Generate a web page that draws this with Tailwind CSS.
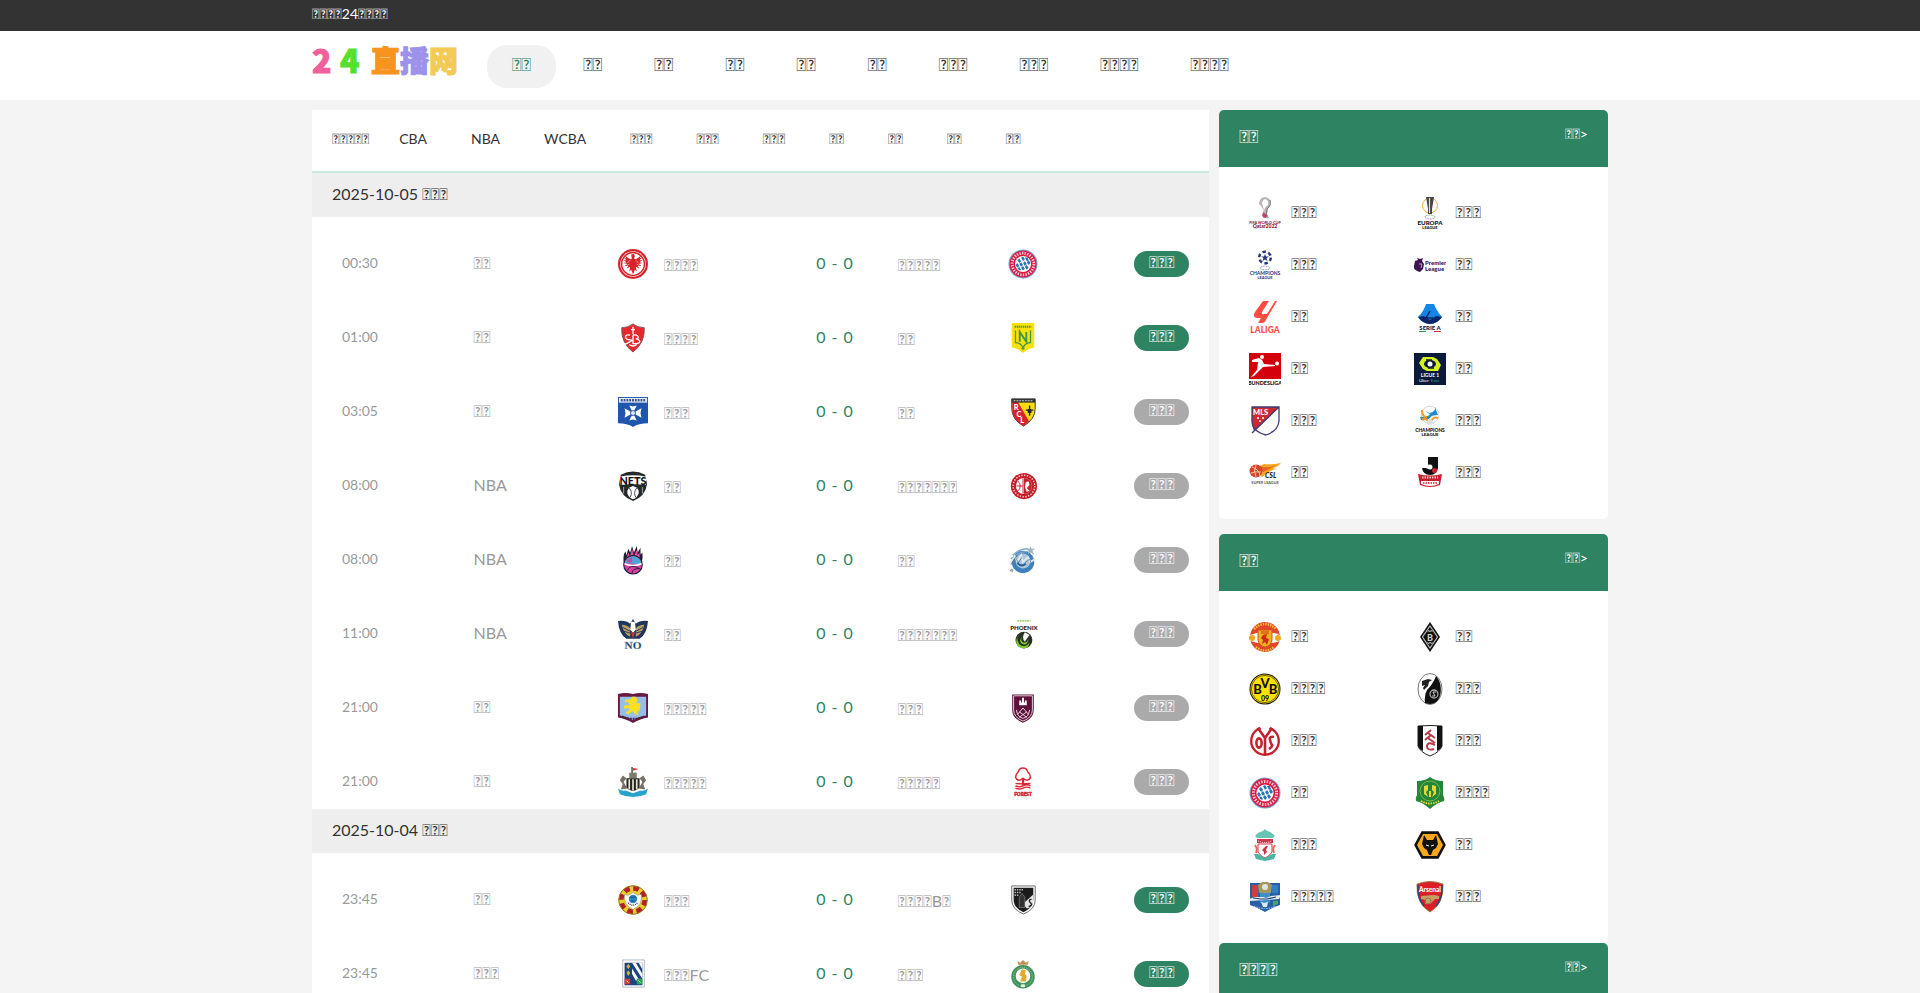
<!DOCTYPE html>
<html lang="zh">
<head>
    <meta charset="utf-8">
    <title>24直播网</title>
    <script src="https://cdn.jsdelivr.net/npm/@tailwindcss/browser@4"></script>
</head>
<body class="h-screen overflow-hidden bg-[#f4f4f4] font-[Lato,sans-serif] text-[#333]">

<!-- Crests -->
<svg class="hidden" xmlns="http://www.w3.org/2000/svg">
    <symbol id="frankfurt" viewBox="0 0 32 32">
        <circle cx="16" cy="16" r="16" fill="#d8232a"/><circle cx="16" cy="16" r="13.6" fill="#fff"/><circle cx="16" cy="16" r="13" fill="#d8232a"/><circle cx="16" cy="16" r="11.4" fill="#fff"/>
        <path d="M14 6l3-1 1 3-1 2 2 1 6-4-2 3 3-1-3 3 3 0-3 2 3 1-4 1 3 2-4 0 2 3-4-2 1 5-2-2-2 5-2-5-2 2 1-5-4 2 2-3-4 0 3-2-4-1 3-1-3-2 3 0-3-3 3 1-2-3 6 4 2-1-1-3z" fill="#d8232a"/><path d="M13 12l-3 3M19 12l3 3M12 16l-3 2M20 16l3 2" stroke="#fff" stroke-width=".6"/>
    </symbol>
    <symbol id="bayern" viewBox="0 0 32 32">
        <circle cx="16" cy="16" r="15.5" fill="#7fa4cf"/><circle cx="16" cy="16" r="14.4" fill="#dc1a44"/>
        <circle cx="16" cy="16" r="11.6" fill="none" stroke="#fff" stroke-width="3" stroke-dasharray="1.5 1.3" opacity=".75"/>
        <circle cx="16" cy="16" r="8.6" fill="#fff"/>
        <path d="M10 12l2-2 2 3-2 2zm4-3l2-1 2 3-2 2zm4 0l3 0 1 3-2 1zM8 17l2-2 2 3-2 2zm4-1l2-2 2 3-2 2zm4-1l2-2 2 3-2 2zm4-1l2-2 2 3-2 2zM10 21l2-2 2 3-1 1zm4-1l2-2 2 3-2 2zm4-1l2-2 2 3-2 2z" fill="#2673b8"/>
    </symbol>
    <symbol id="brest" viewBox="0 0 32 32">
        <path d="M4 5q7 0 12-4 5 4 12 4 1 16-12 26Q3 21 4 5z" fill="#e8262b" stroke="#7b5257" stroke-width="1"/>
        <path d="M16 4v8M14 7h4M13 13q-5-1-5 2t5 3-4 4-4-2M16 13v9h4q4-1 3-3t-4-2q4-1 2-3t-5-1M12 23q4 3 8 0" fill="none" stroke="#fff" stroke-width="1.4"/>
    </symbol>
    <symbol id="nantes" viewBox="0 0 32 32">
        <path d="M4 0h24v26q-7 1-12 6-5-5-12-6z" fill="#fbe10a"/>
        <path d="M7 4h18" stroke="#4a9a3a" stroke-width="2" stroke-dasharray="1.5 .7"/>
        <path d="M8 8v13q5 0 8 5 3-5 8-5V8" fill="none" stroke="#3f9646" stroke-width="1.3"/>
        <path d="M12.500 20V9.500L19.500 20V9.500" fill="none" stroke="#3f9646" stroke-width="2"/><path d="M16 25v4M14 27h4" stroke="#3f9646"/>
    </symbol>
    <symbol id="auxerre" viewBox="0 0 32 32">
        <path d="M0 0h32v28q-10 0-16 4-6-4-16-4z" fill="#1e56ab"/><path d="M1 1h30v5H1z" fill="#e8eef7"/><path d="M3 3.500h26" stroke="#33518d" stroke-width="2.500" stroke-dasharray="2 1"/>
        <path d="M16 17L7 12l1 5-1 5zM16 17l9-5-1 5 1 5zM16 17l-4-8 4 1 4-1zM16 17l-4 8 4-1 4 1z" fill="#fff"/><circle cx="16" cy="17" r="3" fill="#1e56ab"/><circle cx="16" cy="17" r="2.200" fill="#dfe8f5"/>
    </symbol>
    <symbol id="lens" viewBox="0 0 32 32">
        <path d="M4 2h25v10q0 12-12.500 19Q4 24 4 12z" fill="#fcdc0c" stroke="#333" stroke-width="1"/><path d="M4.500 5h6l12 21-6 5Q4 24 4.500 12z" fill="#d9202c"/>
        <path d="M4 2h25v4H4z" fill="#333"/><path d="M6 4h21" stroke="#ddd" stroke-dasharray="2 1"/>
        <g fill="#fff" font-family="Lato" font-weight="900" font-size="8"><text x="6" y="14">R</text><text x="9" y="21">C</text><text x="13" y="28">L</text></g><path d="M23 9v11M19 14h8" stroke="#222" stroke-width="1.500"/><path d="M21 13h4v4h-4z" fill="#222"/>
    </symbol>
    <symbol id="nets" viewBox="0 0 32 32">
        <path d="M3 4q13-7 26 0l2 10q-2 13-15 18Q3 27 1 14z" fill="#26292c"/><path d="M2 6q14-3 28 0v9q-14-2-28 0z" fill="#fff"/><text x="16" y="14.500" text-anchor="middle" font-family="Lato" font-weight="900" font-size="11.500" fill="#111">NETS</text>
        <path d="M16 16q7 2 6 8-2 5-6 6-4-1-6-6-1-6 6-8z" fill="#fff"/><path d="M12 18q4 5 1 10M20 18q-4 5-1 10" fill="none" stroke="#444"/><path d="M6 17v7M26 17v7" stroke="#aaa"/>
    </symbol>
    <symbol id="hapoel" viewBox="0 0 32 32">
        <circle cx="17" cy="16" r="14" fill="#c4202b"/><circle cx="17" cy="16" r="11.500" fill="none" stroke="#f3d0d0" stroke-width="1.500" stroke-dasharray="1.500 1.500"/><circle cx="17" cy="16" r="8.500" fill="#fff"/>
        <path d="M17 7.500a8.500 8.500 0 010 17z" fill="#c4202b"/><path d="M16 8v16M9 16h7M11 11q4 5 0 10" stroke="#c4202b" fill="none"/><path d="M19 12l3-1 1 4-3 3 3 3-3 1-2-5z" fill="#fff"/>
    </symbol>
    <symbol id="fireball" viewBox="0 0 32 32">
        <path d="M6 18Q5 10 8 7l1 4 2-7 2 4 2-7 2 7 3-7 1 7 3-5v7l2-2q1 6-1 11z" fill="#231d38"/><path d="M9 14l2-6 2 4 2-8 2 8 3-7 1 6 2-3v8z" fill="#e5569c"/><path d="M12 14l2-4 2 4 3-5 1 6z" fill="#4aa5da"/>
        <circle cx="16" cy="21" r="10.500" fill="#231d38"/><circle cx="16" cy="21" r="9.300" fill="#d244a0"/><path d="M7 19q3-7 10-7 8 2 8 9-9-1-18-2z" fill="#4aa5da"/><path d="M9 18q2-4 6-5v6z" fill="#d244a0"/><path d="M7 20q9 4 18 0" stroke="#fff" stroke-width="1.600" fill="none"/><path d="M10 27q2-5 7-4 5 0 6 3M15 30q0-5 8-5" stroke="#231d38" fill="none"/>
    </symbol>
    <symbol id="magic" viewBox="0 0 32 32">
        <circle cx="16" cy="18" r="12" fill="#3f80bb"/><circle cx="16" cy="17" r="8" fill="#a9c4db"/><path d="M5 11q7-7 16-7M3 15q8-8 18-8" stroke="#7fa6c9" fill="none" stroke-width="1.500"/><path d="M24 1l1 3 4 0-3 2 2 4-4-2-3 2 1-4-3-2 4 0z" fill="#9db0bd"/><path d="M2 20l5-8 3 5 4-6 2 7 5-5 3 5 5-3" fill="none" stroke="#dfe8ee" stroke-width="2"/><path d="M3 21l5-8 3 6 4-6M18 19l5-4 2 5" fill="none" stroke="#56798f" stroke-width=".8"/><path d="M10 19q4 5 9 1" stroke="#27608f" stroke-width="2" fill="none"/><path d="M3 25l3 1-1 3-3-1z" fill="#9aa9b3"/>
    </symbol>
    <symbol id="pelicans" viewBox="0 0 32 32">
        <path d="M0 2q9-1 13 3l3-5 3 5q4-4 13-3-1 14-9 19H9Q1 16 0 2z" fill="#20355c"/><path d="M4 6q6 0 9 4v9Q6 16 4 6zm24 0q-6 0-9 4v9q7-3 9-13z" fill="#b99d63"/><path d="M5 9l8 4M6 13l7 2M27 9l-8 4M26 13l-7 2" stroke="#20355c"/><path d="M14 3h4l1 8-3 4-3-4z" fill="#fff"/><path d="M14 14h4l-2 7z" fill="#c7343d"/>
        <text x="16" y="31.500" text-anchor="middle" font-family="Liberation Serif" font-weight="bold" font-size="12" fill="#20355c" stroke="#8aa7c5" stroke-width=".4">NO</text>
    </symbol>
    <symbol id="phoenix" viewBox="0 0 32 32">
        <path d="M10 2h14" stroke="#a5d478" stroke-width="2" stroke-dasharray="2 .6"/><text x="17" y="12" text-anchor="middle" font-family="Lato" font-weight="900" font-size="6.500" fill="#222">PHOENIX</text>
        <circle cx="17" cy="22.500" r="9" fill="#263023"/><path d="M14 15q-7 4-2 12 6 5 11-2-1 5-4 6-8 1-10-5-1-7 5-11z" fill="#82cb2d"/><path d="M16 17q-4 5 0 8 4 1 6-4-1 7-6 6-6-3 0-10z" fill="#82cb2d"/><path d="M18 14l5 3-5 7q-4-4 0-10z" fill="#fff"/>
    </symbol>
    <symbol id="villa" viewBox="0 0 32 32">
        <path d="M0 1q8-2 16 0 8-2 16 0v25q-8 1-16 6-8-5-16-6z" fill="#67193f"/><path d="M2 4h28v20q-8 1-14 5-6-4-14-5z" fill="#95bfe6"/><path d="M15 4l4 0 2 4-2 3 5 0-1 8-3 1 2 3-4 0-2-4-5 4-3-2 5-4-3-1-4 1 1-4 6 0-3-4-3 1 1-3 5 0z" fill="#fae01e"/><path d="M4 25q12 5 24 0" stroke="#472244" stroke-dasharray="2 1" stroke-width="2" fill="none"/>
    </symbol>
    <symbol id="burnley" viewBox="0 0 32 32">
        <path d="M6 3h20v15q0 8-10 12Q6 26 6 18z" fill="#5d1039" stroke="#5d1039" stroke-width="3"/><path d="M6 3h20v15q0 8-10 12Q6 26 6 18z" fill="none" stroke="#e9dbe2"/>
        <path d="M12 8h2v2h1V5h2v5h1V8h2v5h-8z" fill="#fff"/><path d="M10 23l6-7 6 7M12 20l8 6M20 20l-8 6M9 18q1 8 7 9 6-1 7-9" stroke="#e9dbe2" fill="none"/>
    </symbol>
    <symbol id="newcastle" viewBox="0 0 32 32">
        <path d="M15 0v8" stroke="#444" stroke-width="1.500"/><path d="M16 1l6 1-6 2z" fill="#e5322d"/><path d="M12 6h8v6h-8z" fill="#817a68"/>
        <path d="M9 12h14v10q-7 7-14 0z" fill="#222"/><path d="M12 13v11M16 13v12M20 13v11" stroke="#e8e3d3" stroke-width="1.800"/><path d="M5 9l4 3-3 4 4 7-7 1 2-6-3-4zM27 9l-4 3 3 4-4 7 7 1-2-6 3-4z" fill="#777167"/>
        <path d="M0 23q3 3 8 2l8 3 8-3q5 1 8-2l-2 6q-14 6-28 0z" fill="#27a3c9"/>
    </symbol>
    <symbol id="forest" viewBox="0 0 32 32">
        <path d="M16 1q4 0 5 4 3 3 3 6-1 3-4 3-2 0-4-2-2 2-4 2-3 0-4-3 0-3 3-6 1-4 5-4z" fill="#fff" stroke="#dd2638" stroke-width="1.600"/><path d="M16 12v7" stroke="#dd2638" stroke-width="2.500"/><path d="M8 17.500q8 1 16 0M8 20q4 2 8 0t8 0M8 22.500q4 2 8 0t8 0" fill="none" stroke="#dd2638" stroke-width="1.500"/>
        <text x="16" y="31" text-anchor="middle" font-family="Lato" font-weight="900" font-size="5" fill="#dd2638" stroke="#dd2638" stroke-width=".5">FOREST</text>
    </symbol>
    <symbol id="varzim" viewBox="0 0 32 32">
        <circle cx="16" cy="16" r="15.500" fill="#ead02a"/><circle cx="16" cy="16" r="12.500" fill="none" stroke="#b3202c" stroke-width="5" stroke-dasharray="6 3.800"/><circle cx="16" cy="16" r="15.300" fill="none" stroke="#8d7a20"/>
        <path d="M7 10l4 1 5-3 5 3 4-1q1 12-9 16Q6 22 7 10z" fill="#fff" stroke="#777" stroke-width=".5"/><circle cx="16" cy="15" r="4.500" fill="#2787c4"/><path d="M13 13h6M14 17h4" stroke="#1c4b73"/><path d="M11 19q5 5 10 0" stroke="#223a55" stroke-width="1.500" fill="none" stroke-dasharray="1 1"/>
    </symbol>
    <symbol id="guimaraes" viewBox="0 0 32 32">
        <path d="M4 1h25v15q0 10-12.500 15Q4 26 4 16z" fill="#fff" stroke="#666"/><path d="M6 3h21v13q0 8-10.500 13Q6 24 6 16z" fill="#1b1b1b"/><path d="M27 10v6q0 8-7 9l-4-5z" fill="#e5e5e5"/><path d="M7 5h9M7 8h7M7 11h5" stroke="#bbb" stroke-width="1.500" stroke-dasharray="1.500 1"/><path d="M12 24V13l3-4 3 4v11z" fill="#333" stroke="#999" stroke-width=".6"/><path d="M25 15q-4 1-1 4t-2 4" stroke="#222" stroke-width="1.500" fill="none"/>
    </symbol>
    <symbol id="feirense" viewBox="0 0 32 32">
        <path d="M5 1h23v29H5z" fill="#fff" stroke="#a9b7c0"/><path d="M7 4h19v24H7z" fill="#1c4280"/><path d="M15 4h4l7 12v5zM22 4h4v7zM15 10l8 13h-4l-4-7z" fill="#fff"/><path d="M11 5l2 3-2 3-2-3zM11 12l2 3-2 3-2-3z" fill="#cdb53a"/><path d="M7 21h6v6H7z" fill="#d63a34"/><path d="M20 21h6v6h-6z" fill="#2ea45a"/><path d="M9 23l2 2M22 23l2 2" stroke="#fff"/>
    </symbol>
    <symbol id="lions" viewBox="0 0 32 32">
        <path d="M11 6l-1-4 3 2 3-3 3 3 3-2-1 4z" fill="#c68e57"/><circle cx="16" cy="19" r="12.500" fill="#3f915a"/><circle cx="16" cy="19" r="10" fill="none" stroke="#a9d0b0" stroke-dasharray="1 1"/><circle cx="16" cy="18" r="7.800" fill="#fff"/><path d="M15 11l4 1-1 4 2 2-1 6h-6l2-5-3-2z" fill="#e2a92a"/><path d="M14 27h4v3h-4z" fill="#e9f3ea"/>
    </symbol>
    <symbol id="worldcup" viewBox="0 0 32 32">
        <path d="M16 0q7 1 5 8-3 4-3 9l2 4h-6q2-10-4-14 0-6 6-7z" fill="#bbb3b3"/><path d="M16 2q4 1 3 6-4 2-4 7-1-7-2-8 0-4 3-5z" fill="#fff"/><path d="M21 3q2 5-3 9l-1 8" stroke="#777" fill="none"/><path d="M14 15l5 4-3 2-3-2z" fill="#b34b67"/>
        <text x="16" y="27" text-anchor="middle" font-family="Lato" font-weight="900" font-size="3.800" fill="#8a1538">FIFA WORLD CUP</text><text x="16" y="31" text-anchor="middle" font-family="Lato" font-weight="900" font-size="5" fill="#8a1538">Qatar2022</text>
    </symbol>
    <symbol id="europa" viewBox="0 0 32 32">
        <circle cx="16" cy="8.500" r="7.500" fill="none" stroke="#f0a83a"/><path d="M12 0h8l-2 12v5h-4v-5z" fill="#444"/><path d="M15.500 1v15" stroke="#ddd" stroke-width="1.200"/><ellipse cx="16" cy="20" rx="5" ry="2" fill="none" stroke="#888" stroke-dasharray="1 .6"/>
        <text x="16" y="28" text-anchor="middle" font-family="Lato" font-weight="900" font-size="6.200" fill="#111">EUROPA</text><text x="16" y="32" text-anchor="middle" font-family="Lato" font-weight="900" font-size="4" fill="#111">LEAGUE</text>
    </symbol>
    <symbol id="ucl" viewBox="0 0 32 32">
        <circle cx="16" cy="8.500" r="5.800" fill="none" stroke="#26357c" stroke-width="2.400" stroke-dasharray="3.500 2.500"/><path d="M16 5l1 2.500h3L17.500 9l1 3-2.500-1.500L13.500 12l1-3L12 7.500h3z" fill="#26357c"/><ellipse cx="16" cy="19" rx="5" ry="1.800" fill="none" stroke="#7f8ab5" stroke-dasharray="1 .6"/>
        <text x="16" y="26" text-anchor="middle" font-family="Lato" font-weight="700" font-size="5" fill="#26357c">CHAMPIONS</text><text x="16" y="30" text-anchor="middle" font-family="Lato" font-weight="700" font-size="4" fill="#26357c">LEAGUE</text>
    </symbol>
    <symbol id="premier" viewBox="0 0 32 32">
        <path d="M1 12l3-1-1-2 3 1 3-1-1 3 2 3-1 5-3 3q-7-2-6-6z" fill="#3d1152"/><path d="M5 15l3 0-1 4" stroke="#b9a3c4" fill="none"/>
        <g font-family="Lato" font-weight="900" font-size="6" fill="#3d1152"><text x="11" y="16">Premier</text><text x="11" y="21.500">League</text></g>
    </symbol>
    <symbol id="laliga" viewBox="0 0 32 32">
        <path d="M14 0h6l-7 11q-1 3 2 2h3l8-13h2l-10 17q-2 5-5 5h-4l3-5h-4q-5-1-2-6z" fill="#ff4b44"/><text x="16" y="32" text-anchor="middle" font-family="Lato" font-weight="900" font-size="8.500" fill="#ff4b44">LALIGA</text>
    </symbol>
    <symbol id="seriea" viewBox="0 0 32 32">
        <path d="M12 3h8q2 6 8 13-5 7-12 7T4 16q6-6 8-13z" fill="#1487e6"/><path d="M4 16l6-1 6 4 6-4 6 1q-5 7-12 7T4 16z" fill="#0a2668"/><path d="M16 10l-4 7 7 0" fill="none" stroke="#0a2668" stroke-width="1.500"/>
        <text x="16" y="28.500" text-anchor="middle" font-family="Lato" font-weight="900" font-size="6" fill="#0a2050">SERIE A</text><path d="M5 30.500h7" stroke="#2a9a50"/><path d="M20 30.500h7" stroke="#d22c35"/>
    </symbol>
    <symbol id="bundesliga" viewBox="0 0 32 32">
        <path d="M0 0h32v26H0z" fill="#d3010c"/><circle cx="13" cy="4" r="2" fill="#fff"/><path d="M3 7l7-2 3 2 2 4 11 1v1l-12 1-4 4-5 5-3 1 6-7 1-8-6 0z" fill="#fff"/><circle cx="28" cy="10.500" r="2" fill="#fff"/><text x="16" y="32" text-anchor="middle" font-family="Lato" font-weight="900" font-size="5.400" fill="#111">BUNDESLIGA</text>
    </symbol>
    <symbol id="ligue1" viewBox="0 0 32 32">
        <path d="M0 0h32v32H0z" fill="#0a1a3c"/><path d="M9 4h10l4 2 4 6-3 6H13l-4-2-4-6z" fill="#d5f11b"/><path d="M12 7l6 0M14 15h6" stroke="#0a1a3c" stroke-width="1.500"/><ellipse cx="16" cy="11" rx="6" ry="4" fill="#0a1a3c"/><circle cx="16" cy="11" r="2.500" fill="#fff"/>
        <text x="16" y="24" text-anchor="middle" font-family="Lato" font-weight="700" font-size="5" fill="#fff">LIGUE 1</text><text x="10" y="28.500" text-anchor="middle" font-family="Lato" font-size="4.500" fill="#fff">Uber</text><text x="21" y="28.500" text-anchor="middle" font-family="Lato" font-size="4.500" fill="#1ba57b">Eats</text>
    </symbol>
    <symbol id="mls" viewBox="0 0 32 32">
        <path d="M3 2h27v14q-1 10-13 14Q2 26 3 14z" fill="#fff"/><path d="M3 2h27L5 26Q3 22 3 14z" fill="#d02a31"/><path d="M3 2h27v14q-1 10-13 14Q2 26 3 14zM30 2L3 28" fill="none" stroke="#3a3c74" stroke-width="1.300"/><text x="4" y="10" font-family="Lato" font-weight="900" font-size="7.500" fill="#fff">MLS</text><path d="M8 13h2M13 13h2M10 16h2" stroke="#fff" stroke-width="1.500"/>
    </symbol>
    <symbol id="afc" viewBox="0 0 32 32">
        <circle cx="16" cy="10" r="8.800" fill="#fff" stroke="#bbb" stroke-width=".6"/><path d="M12 2q-2 5 4 6 6-2 5-6 2 6 3 8-7 0-8 3-3 3-9 2l-1-3q9 0 10-3-6-2-4-7z" fill="#1f8bd5"/><path d="M8 5q0 7 5 7M24 13q-6-2-7 5M8 14q5-1 7 4" stroke="#f49a28" stroke-width="2" fill="none"/><circle cx="16" cy="17" r="3" fill="#ddd"/>
        <text x="16" y="27" text-anchor="middle" font-family="Lato" font-weight="900" font-size="4.800" fill="#111">CHAMPIONS</text><text x="16" y="31" text-anchor="middle" font-family="Lato" font-weight="900" font-size="4.500" fill="#111">LEAGUE</text>
    </symbol>
    <symbol id="csl" viewBox="0 0 32 32">
        <path d="M5 8q6 2 10-1 7 1 17-1-3 4-8 5 2 1 4 1-7 1-9 4l-6 4z" fill="#f5a623"/><path d="M10 9q8 3 17-1-6 4-13 7z" fill="#e8661f"/><circle cx="7" cy="14" r="6.500" fill="#d5442c"/><path d="M3 10q8 3 8 9M7 8q-3 6 0 12M2 16q4-2 10-1" stroke="#f7c793" fill="none"/><text x="16" y="21" font-family="Lato" font-weight="900" font-style="italic" font-size="7" fill="#222">CSL</text><text x="16" y="26.500" text-anchor="middle" font-family="Lato" font-weight="700" font-size="3.800" fill="#555">SUPER LEAGUE</text>
    </symbol>
    <symbol id="jleague" viewBox="0 0 32 32">
        <path d="M14 0h10v11q-1 7-8 7t-8-7h4q2 2 4-1l-2-3z" fill="#111"/><circle cx="16" cy="10" r="2.500" fill="#fff"/><circle cx="20.500" cy="13.500" r="2.500" fill="#d71f36"/><path d="M4 17q12 3 24 0l-2 11q-10 4-20 0z" fill="#c9202f"/><path d="M7 24h18v3q-9 4-18 0z" fill="#fff"/><path d="M8 20.500h16" stroke="#f1c4c8" stroke-width="2" stroke-dasharray="1.500 1"/><path d="M9 26h14" stroke="#c9202f" stroke-width="1.500" stroke-dasharray="1.500 1"/>
    </symbol>
    <symbol id="manutd" viewBox="0 0 32 32">
        <circle cx="16" cy="16" r="15" fill="#e0472a"/><path d="M5 8Q16-2 27 8" stroke="#f6c23a" stroke-width="2.500" stroke-dasharray="1.500 1" fill="none"/><path d="M7 26q9 7 18 0" stroke="#f6c23a" stroke-width="2" stroke-dasharray="1.500 1" fill="none"/>
        <path d="M1 14q15-6 30 0v6q-15 5-30 0z" fill="#fff"/><circle cx="3" cy="17" r="3" fill="#f3a51e"/><circle cx="29" cy="17" r="3" fill="#f3a51e"/><path d="M9 9h14v10q-1 6-7 7-6-1-7-7z" fill="#f6b21d" stroke="#d8551f"/><path d="M12 10h8v3h-8z" fill="#e0701f"/><path d="M14 14l4-1-1 4 3 1-2 6-2-3-3 2 1-4-2-2z" fill="#cf2a1b"/>
    </symbol>
    <symbol id="gladbach" viewBox="0 0 32 32">
        <path d="M16 1l10 15-10 15L6 16z" fill="#111"/><path d="M16 5l7.500 11L16 27 8.500 16z" fill="none" stroke="#bbb" stroke-width="1.200"/><path d="M12 10h8M12 22h8M13 8l3 3 3-3M13 24l3-3 3 3" stroke="#999" fill="none"/><path d="M12 12h8v8h-8z" fill="#111"/><text x="16" y="19.500" text-anchor="middle" font-family="Lato" font-weight="900" font-size="9" fill="#ccc">B</text>
    </symbol>
    <symbol id="dortmund" viewBox="0 0 32 32">
        <circle cx="16" cy="16" r="15.500" fill="#111"/><circle cx="16" cy="16" r="14.500" fill="#fde100"/><circle cx="16" cy="16" r="13.600" fill="none" stroke="#111" stroke-width=".6"/>
        <g font-family="Lato" font-weight="900" fill="#111" text-anchor="middle"><text x="8.500" y="21" font-size="13">B</text><text x="16" y="15" font-size="13">V</text><text x="24" y="21" font-size="13">B</text><text x="16" y="28" font-size="7">09</text></g>
    </symbol>
    <symbol id="freiburg" viewBox="0 0 32 32">
        <ellipse cx="16" cy="16" rx="12" ry="15.500" fill="#fff" stroke="#777"/><path d="M22 3q-3 8-9 14-3 5-2 13 11 4 15-7 3-12-4-20z" fill="#111"/><path d="M8 8l6-2 4 1-3 2-1 4-4 4-1-2 2-3-3 1z" fill="#222"/><circle cx="20" cy="21" r="4" fill="none" stroke="#aaa" stroke-width="1.300"/><path d="M22 19h-3l2 4h-3" stroke="#ccc" fill="none"/>
    </symbol>
    <symbol id="mainz" viewBox="0 0 32 32">
        <circle cx="16" cy="16" r="13.800" fill="#fff" stroke="#c8212e" stroke-width="2.400"/><path d="M10 1h12l-6 8z" fill="#fff"/><g fill="none" stroke="#c8212e" stroke-width="2.600"><path d="M9 3l7 10 7-10M16 12v17"/><ellipse cx="10" cy="18" rx="2.600" ry="4.600"/><path d="M25 12q-5-1-4 3t2 5-3 4"/></g>
    </symbol>
    <symbol id="fulham" viewBox="0 0 32 32">
        <path d="M4 1q12-1 24 0v20q-2 6-12 10Q6 27 4 21z" fill="#fff" stroke="#222"/><path d="M4 1h5v25q-4-2-5-5zM28 1h-5v25q4-2 5-5z" fill="#111"/><path d="M17 5l-6 5M14 8l7 5M17 10l-6 5M14 13l7 5M21 20q-7-4-8 1 0 5 7 3" fill="none" stroke="#b63945" stroke-width="1.900"/>
    </symbol>
    <symbol id="guoan" viewBox="0 0 32 32">
        <path d="M3 4q8 0 13-4 5 4 13 4v14q2 4 1 6-6 1-14 8-8-7-14-8-1-3 1-6z" fill="#23863c"/><circle cx="16" cy="14" r="10" fill="none" stroke="#78b83e"/><path d="M10 9l4-1v5l-2 2 2 5-4-3zM22 9l-4-1v5l2 2-2 5 4-3zM15 14h2v6h-2z" fill="#e8d832"/><path d="M7 24q9 5 18 0" stroke="#e8d832" stroke-width="2" stroke-dasharray="1.500 1" fill="none"/>
    </symbol>
    <symbol id="liverpool" viewBox="0 0 32 32">
        <path d="M6 7q3-4 8-5l2-2 2 2q5 1 8 5l-2 2H8z" fill="#67c4b2"/><path d="M8 10h16v4H8z" fill="#d2314a"/><path d="M9 12q7 3 14 0" stroke="#fff" fill="none" stroke-dasharray="1 1"/><path d="M9 15h14v8q-3 5-7 6-4-1-7-6z" fill="#fff" stroke="#d2314a"/><path d="M17 17l2 0-2 4 1 2-3 3 0-3-2-2z" fill="#d2314a"/><path d="M6 16q3 4 1 8M26 16q-3 4-1 8" stroke="#e2695a" stroke-width="2" fill="none"/><path d="M5 25h4l7 4 7-4h4l-2 5-9 2-9-2z" fill="#4eb5a1"/>
    </symbol>
    <symbol id="wolves" viewBox="0 0 32 32">
        <path d="M8 3h16l7 13-7 13H8L1 16z" fill="#111" stroke="#111" stroke-width="1.500"/><path d="M9 5h14l6 11-6 11H9L3 16z" fill="#f8a81d"/><path d="M10 6l3 5h6l3-5 2 9-2 4-3 2-2 5h-2l-2-5-3-2-2-4z" fill="#111"/><path d="M12 16l3 1M20 16l-3 1" stroke="#fff"/>
    </symbol>
    <symbol id="hertha" viewBox="0 0 32 32">
        <path d="M1 2h30v22q-6 2-15 7-9-5-15-7z" fill="#2a5ea6"/><path d="M3 4h6v12H3z" fill="#cf3d3e"/><path d="M23 4h6v8h-6z" fill="#2f7fc4"/><path d="M9 4l4-3h6l4 3-1 8H10z" fill="#a7965d"/><circle cx="16" cy="6" r="3" fill="#dfe4de"/><path d="M11 12h10v10H11z" fill="#3c8fcb"/><path d="M0 18l6-2 8 0 3 1 5-2 10-1-2 4-13 1-16 1z" fill="#e3edf5"/><path d="M4 17l8 1 6 0 9-2" stroke="#1d3d6f" stroke-width="1.200" fill="none"/><path d="M12 21l3 1 4-1-1 5h-4z" fill="#dceaf2"/><path d="M24 20h5v3l-5 2z" fill="#4ea45b"/><path d="M5 25q11 5 22 0" stroke="#b7d3ec" stroke-dasharray="1.500 1" fill="none"/>
    </symbol>
    <symbol id="arsenal" viewBox="0 0 32 32">
        <path d="M3 3q13-5 26 0 1 20-13 28Q2 23 3 3z" fill="#dc1f26" stroke="#9a8346"/><path d="M4 4q-1 13 6 21M28 4q1 13-6 21" stroke="#28477e" stroke-width="1.500" fill="none"/><text x="16" y="10.500" text-anchor="middle" font-family="Lato" font-weight="900" font-size="6.500" fill="#fff">Arsenal</text><path d="M7 15l13-1 5 1v3h-4l-5 5h-5l1-4-5-1z" fill="#c7a066"/><circle cx="14" cy="20" r="3" fill="none" stroke="#9b7544"/>
    </symbol>
</svg>

<!-- Top strip -->
<div class="h-[31px] bg-[#333]">
    <div class="mx-auto w-[67.5%] text-sm leading-7 text-white"><span data-n="4"></span>24<span data-n="4"></span></div>
</div>

<!-- Header -->
<header class="h-[69px] bg-white">
    <div class="mx-auto flex h-full w-[67.5%] items-center">
        <a href="#" class="flex w-[175px] shrink-0 items-center pb-[13px] font-['Noto_Sans_CJK_SC',sans-serif] text-[29px] leading-[44px] font-black [-webkit-text-stroke:1px]">
            <span class="w-7 text-[32px] text-[#f0609a]">2</span>
            <span class="w-[31px] text-[32px] text-[#56e02c]">4</span>
            <span class="text-[#f7941e]">直</span><span class="text-[#9c92ea]">播</span><span class="text-[#f3ca55]">网</span>
        </a>
        <nav id="nav" class="flex gap-[2px] pt-[2px] text-lg"></nav>
    </div>
</header>

<div class="mx-auto mt-[10px] flex w-[67.5%] items-start gap-[10px]">
    <!-- Matches -->
    <main class="flex-1 bg-white">
        <div id="filters" class="flex h-[63px] items-center gap-11 border-b-2 border-[#c9e7dc] px-5 pb-[3px] text-sm"></div>
        <div id="matches"></div>
    </main>

    <!-- Sidebar -->
    <aside id="side" class="w-[30%] shrink-0"></aside>
</div>

<script>
    // n placeholder characters
    const g = n => '\u{10F000}'.repeat(n)
    const icon = (id, cls) => `<svg class="${cls}"><use href="#${id}"/></svg>`

    document.querySelectorAll('[data-n]').forEach(el => el.textContent = g(+el.dataset.n))

    document.getElementById('nav').innerHTML = [2, 2, 2, 2, 2, 2, 3, 3, 4, 4].map((n, i) => `
        <a href="#" class="flex h-[43px] items-center rounded-[20px] px-[25px] pb-[6px] ${i === 0 ? 'bg-[#f1f1f1] text-[#2e8362]' : ''}">${g(n)}</a>`).join('')

    document.getElementById('filters').innerHTML =
        `<div class="flex gap-[30px]"><span>${g(5)}</span><a href="#">CBA</a></div>` +
        ['NBA', 'WCBA', g(3), g(3), g(3), g(2), g(2), g(2), g(2)].map(t => `<a href="#">${t}</a>`).join('')

    // time, league, home crest, home, away, away crest, live
    const days = [
        ['2025-10-05', [
            ['00:30', g(2), 'frankfurt', g(4), g(5), 'bayern', 1],
            ['01:00', g(2), 'brest', g(4), g(2), 'nantes', 1],
            ['03:05', g(2), 'auxerre', g(3), g(2), 'lens', 0],
            ['08:00', 'NBA', 'nets', g(2), g(7), 'hapoel', 0],
            ['08:00', 'NBA', 'fireball', g(2), g(2), 'magic', 0],
            ['11:00', 'NBA', 'pelicans', g(2), g(7), 'phoenix', 0],
            ['21:00', g(2), 'villa', g(5), g(3), 'burnley', 0],
            ['21:00', g(2), 'newcastle', g(5), g(5), 'forest', 0]
        ]],
        ['2025-10-04', [
            ['23:45', g(2), 'varzim', g(3), g(4) + 'B' + g(1), 'guimaraes', 1],
            ['23:45', g(3), 'feirense', g(3) + 'FC', g(3), 'lions', 1]
        ]]
    ]

    document.getElementById('matches').innerHTML = days.map(([date, rows]) => `
        <h2 class="h-11 bg-[#eee] px-5 text-base leading-[42px]">${date} ${g(3)}</h2>
        <table class="w-full table-fixed text-[#999]">
            <colgroup>
                <col class="w-[18%]"><col class="w-[16.1%]"><col class="w-[22.1%]"><col class="w-[9.1%]"><col class="w-[12.3%]"><col class="w-[14%]"><col>
            </colgroup>
            <tbody>${rows.map(r => `
                <tr class="h-[74px]">
                    <td class="pt-[18px] pl-[30px] text-sm">${r[0]}</td>
                    <td class="pt-[18px]">${r[1]}</td>
                    <td class="pt-5"><div class="flex items-center gap-4">${icon(r[2], 'size-[30px]')}<span class="pt-[2px]">${r[3]}</span></div></td>
                    <td class="pt-[18px] text-[#2e8362]"><div class="flex gap-[6px]"><span>0</span><span>-</span><span>0</span></div></td>
                    <td class="pt-[22px] whitespace-nowrap">${r[4]}</td>
                    <td class="pt-5">${icon(r[5], 'size-[30px]')}</td>
                    <td class="pt-5 pr-5"><button class="ml-auto block h-[26px] w-[55px] rounded-full pb-1 leading-[22px] text-white ${r[6] ? 'bg-[#2e8362]' : 'bg-[#aaa]'}">${g(3)}</button></td>
                </tr>`).join('')}
            </tbody>
        </table>`).join('')

    const cards = [
        [2, 'mb-[15px]', [['worldcup', 3], ['europa', 3], ['ucl', 3], ['premier', 2], ['laliga', 2], ['seriea', 2], ['bundesliga', 2], ['ligue1', 2], ['mls', 3], ['afc', 3], ['csl', 2], ['jleague', 3]]],
        [2, '', [['manutd', 2], ['gladbach', 2], ['dortmund', 4], ['freiburg', 3], ['mainz', 3], ['fulham', 3], ['bayern', 2], ['guoan', 4], ['liverpool', 3], ['wolves', 2], ['hertha', 5], ['arsenal', 3]]],
        [4, '', []]
    ]

    document.getElementById('side').innerHTML = cards.map(([n, gap, items]) => `
        <section class="overflow-hidden rounded-[5px] bg-white ${gap}">
            <div class="flex h-[57px] justify-between bg-[#2e8362] px-5 text-white">
                <h2 class="pt-[12px] text-lg">${g(n)}</h2>
                <a href="#" class="pt-[14px] text-sm">${g(2)}&gt;</a>
            </div>
            <ul class="grid grid-cols-2 px-[30px] py-5">${items.map(([id, k]) => `
                <li class="h-[52px]"><a href="#" class="flex h-full items-center gap-[10px]">${icon(id, 'size-8')}<span class="pb-[2px]">${g(k)}</span></a></li>`).join('')}
            </ul>
        </section>`).join('')
</script>
</body>
</html>
